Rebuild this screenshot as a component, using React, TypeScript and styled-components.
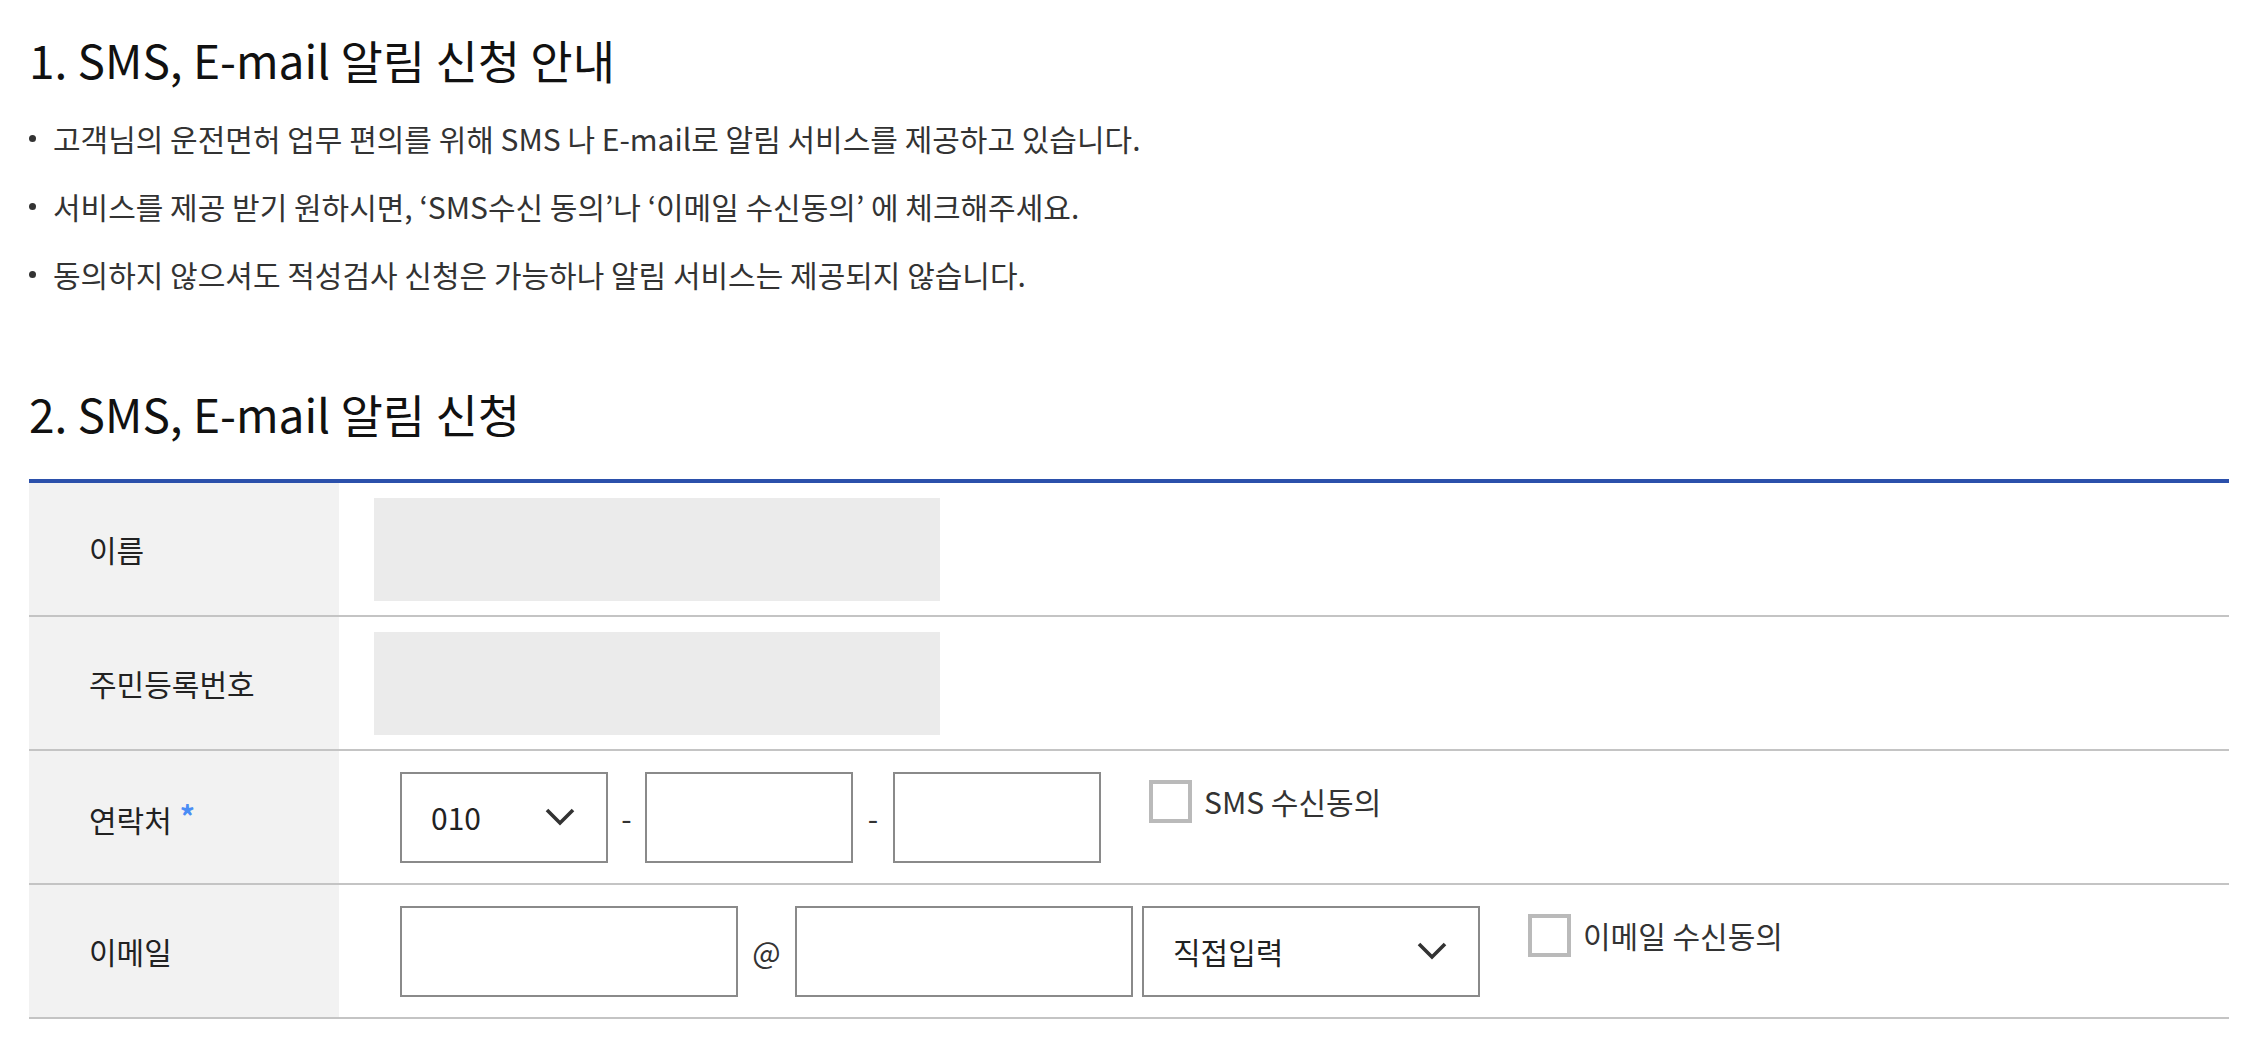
import React from 'react';
import styled, { createGlobalStyle } from 'styled-components';

const GlobalStyle = createGlobalStyle`
  body {
    margin: 0;
    background: #fff;
    font-family: 'Noto Sans CJK KR', 'Noto Sans', sans-serif;
    color: #222;
  }
`;

const Page = styled.div`
  width: 2200px;
  padding: 32px 0 0 29px;
`;

const Title = styled.h2<{ $top?: number }>`
  margin: ${(p) => p.$top || 0}px 0 0;
  font-size: 46px;
  line-height: 54px;
  font-weight: 400;
  color: #111;
`;

const Notes = styled.ul`
  list-style: none;
  margin: 18px 0 0;
  padding: 0;
`;

const Note = styled.li`
  display: flex;
  align-items: center;
  font-size: 30px;
  line-height: 68px;
  color: #333;

  &::before {
    content: '';
    width: 7px;
    height: 7px;
    border-radius: 50%;
    background: #333;
    margin-right: 17px;
  }
`;

const Table = styled.div`
  margin-top: 39px;
  border-top: 4px solid #2b50ab;
`;

const Row = styled.div`
  display: flex;
  height: 132px;
  border-bottom: 2px solid #c4c4c4;
`;

const Label = styled.div`
  width: 250px;
  flex: none;
  padding-left: 60px;
  display: flex;
  align-items: center;
  background: #f2f2f2;
  font-size: 30px;
  color: #222;
`;

const Required = styled.span`
  color: #4a8df5;
  margin-left: 8px;
  font-size: 30px;
  font-weight: 700;
  vertical-align: 4px;
`;

const Cell = styled.div<{ $pad: number }>`
  flex: 1;
  display: flex;
  align-items: center;
  padding-left: ${(p) => p.$pad}px;
`;

const ReadOnlyBox = styled.div`
  width: 566px;
  height: 103px;
  background: #ebebeb;
`;

const TextBox = styled.div<{ $w: number }>`
  box-sizing: border-box;
  width: ${(p) => p.$w}px;
  height: 91px;
  border: 2px solid #8a8a8a;
  background: #fff;
`;

const Select = styled.div<{ $w: number }>`
  box-sizing: border-box;
  width: ${(p) => p.$w}px;
  height: 91px;
  border: 2px solid #8a8a8a;
  background: #fff;
  display: flex;
  align-items: center;
  justify-content: space-between;
  padding: 0 31px 0 29px;
  font-size: 30px;
  color: #222;
`;

const Sep = styled.span<{ $w: number }>`
  width: ${(p) => p.$w}px;
  text-align: center;
  font-size: 30px;
  color: #333;
`;

const Agree = styled.label<{ $gap: number }>`
  align-self: flex-start;
  margin: 28px 0 0 ${(p) => p.$gap}px;
  display: flex;
  align-items: center;
  gap: 12px;
  font-size: 30px;
  color: #333;
`;

const Box = styled.span`
  box-sizing: border-box;
  width: 43px;
  height: 43px;
  border: 4px solid #bababa;
  background: #fff;
`;

const Chevron = () => (
  <svg width="30" height="18" viewBox="0 0 30 18">
    <polyline points="2,2 15,15 28,2" fill="none" stroke="#333" strokeWidth="3.6" />
  </svg>
);

const notes = [
  '고객님의 운전면허 업무 편의를 위해 SMS 나 E-mail로 알림 서비스를 제공하고 있습니다.',
  '서비스를 제공 받기 원하시면, ‘SMS수신 동의’나 ‘이메일 수신동의’ 에 체크해주세요.',
  '동의하지 않으셔도 적성검사 신청은 가능하나 알림 서비스는 제공되지 않습니다.',
];

export default function App() {
  return (
    <Page>
      <GlobalStyle />
      <Title>1. SMS, E-mail 알림 신청 안내</Title>
      <Notes>
        {notes.map((n) => (
          <Note key={n}>{n}</Note>
        ))}
      </Notes>

      <Title $top={78}>2. SMS, E-mail 알림 신청</Title>
      <Table>
        <Row>
          <Label>이름</Label>
          <Cell $pad={35}>
            <ReadOnlyBox />
          </Cell>
        </Row>
        <Row>
          <Label>주민등록번호</Label>
          <Cell $pad={35}>
            <ReadOnlyBox />
          </Cell>
        </Row>
        <Row>
          <Label>
            <span>
              연락처<Required>*</Required>
            </span>
          </Label>
          <Cell $pad={61}>
            <Select $w={208}>
              010
              <Chevron />
            </Select>
            <Sep $w={37}>-</Sep>
            <TextBox $w={208} />
            <Sep $w={40}>-</Sep>
            <TextBox $w={208} />
            <Agree $gap={48}>
              <Box />
              SMS 수신동의
            </Agree>
          </Cell>
        </Row>
        <Row>
          <Label>이메일</Label>
          <Cell $pad={61}>
            <TextBox $w={338} />
            <Sep $w={57}>@</Sep>
            <TextBox $w={338} />
            <Sep $w={9} />
            <Select $w={338}>
              직접입력
              <Chevron />
            </Select>
            <Agree $gap={48}>
              <Box />
              이메일 수신동의
            </Agree>
          </Cell>
        </Row>
      </Table>
    </Page>
  );
}
